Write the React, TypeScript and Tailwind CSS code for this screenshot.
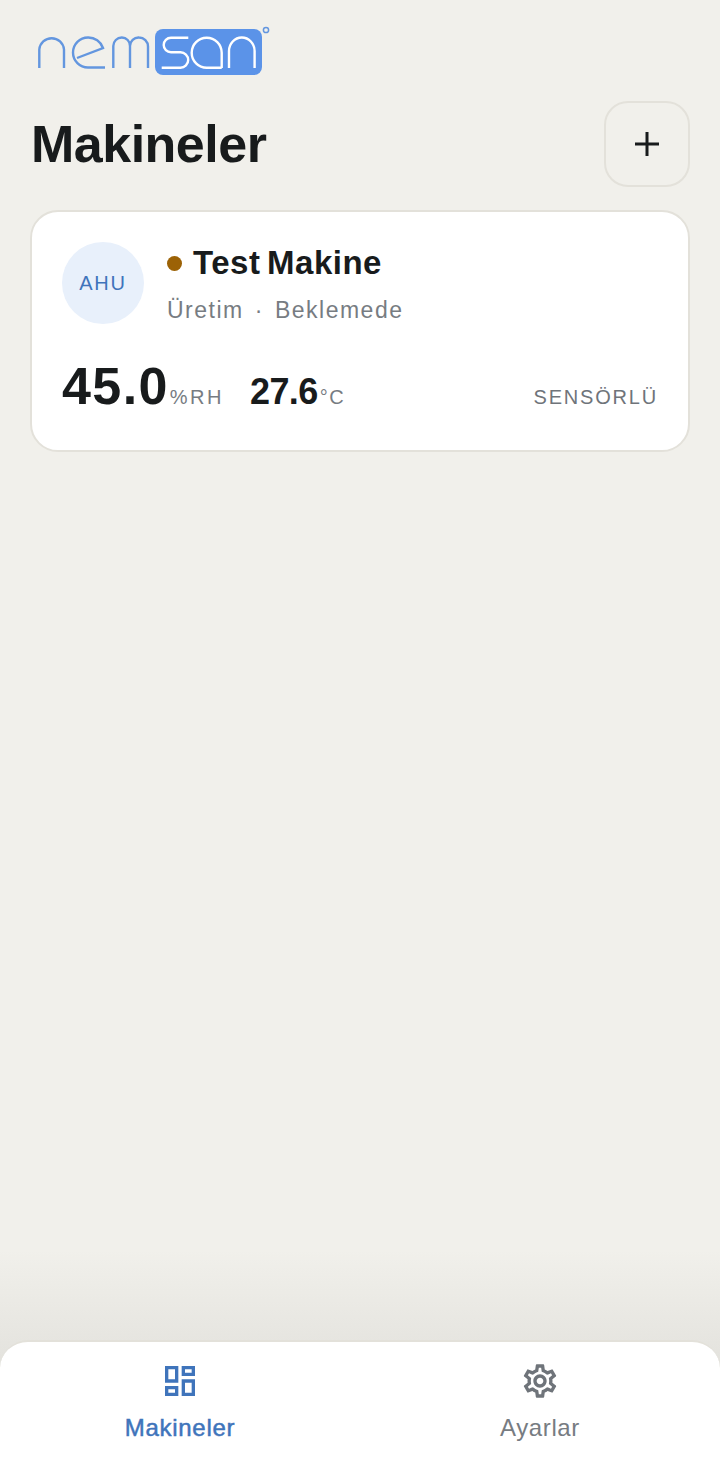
import React from 'react';
import { MdOutlineDashboard, MdOutlineSettings } from 'react-icons/md';

const NemsanLogo = () => (
  <svg width="236" height="54" viewBox="0 0 236 54" fill="none" className="block">
    {/* viewBox origin = page (36, 24) */}
    <g stroke="#6396df" strokeWidth="2.4">
      <path d="M3.3 44V25.5A12.4 12.4 0 0 1 28 25.5V44" />
      <path d="M41 34L67 24A15.5 15.5 0 0 0 52 13.5A15 15 0 0 0 37 28.5A15 15 0 0 0 52 43.5H69" />
      <path d="M77.3 44V22A8.5 8.5 0 0 1 85.8 13.5A8.3 8.3 0 0 1 94 22V44M94 22A8.5 8.5 0 0 1 103 13.5A9 9 0 0 1 112 22.5V44" />
    </g>
    <rect x="119" y="5" width="107" height="46" rx="8" fill="#5b93e8" />
    <g stroke="#ffffff" strokeWidth="2.4">
      <path d="M152.3 13.7H135A7.3 7.3 0 0 0 135 28.3H144.5A7.7 7.7 0 0 1 144.5 43.7H125.7" />
      <path d="M185.7 44V28.7A15 15 0 1 0 170.7 43.7H185.7" />
      <path d="M193 44V27A12.8 13.5 0 0 1 218.6 27V44" />
    </g>
    <circle cx="230" cy="6" r="2.6" stroke="#6396df" strokeWidth="1.5" />
  </svg>
);

const MachineCard = () => (
  <div className="mx-[30px] mt-[23px] h-[242px] rounded-[28px] border-2 border-[#e3e1da] bg-white px-[30px] pt-[30px]">
    <div className="flex items-start gap-[23px]">
      <div className="flex h-[82px] w-[82px] items-center justify-center rounded-full bg-[#e8f0fb] text-[20px] tracking-[1.8px] text-[#3f74bb]">
        AHU
      </div>
      <div className="min-w-0">
        <div className="flex h-[42px] items-center">
          <span className="h-[15px] w-[15px] rounded-full bg-[#9c6206]" />
          <span className="ml-[11px] text-[33px] font-bold leading-[42px] tracking-[0.5px] text-[#181b1c] [word-spacing:-3px]">
            Test Makine
          </span>
        </div>
        <div className="mt-[11px] text-[23px] leading-[30px] tracking-[1.5px] text-[#777c82]">
          Üretim<span className="mx-[11px]">·</span>Beklemede
        </div>
      </div>
    </div>
    <div className="mt-[31px] flex items-baseline">
      <span className="text-[52px] font-bold leading-[60px] tracking-[1.4px] text-[#181b1c]">45.0</span>
      <span className="ml-[1px] text-[20px] tracking-[2.5px] text-[#777c82]">%RH</span>
      <span className="ml-[26px] text-[36px] font-bold tracking-[-0.6px] text-[#181b1c]">27.6</span>
      <span className="ml-[2px] text-[20px] tracking-[1.5px] text-[#777c82]">°C</span>
      <span className="ml-auto text-[20px] tracking-[1.8px] text-[#6f747a]">SENSÖRLÜ</span>
    </div>
  </div>
);

const TabBar = () => (
  <div className="relative">
    {/* fade runs behind the bar's rounded corners */}
    <div className="absolute bottom-[97px] left-0 right-0 h-[118px] bg-gradient-to-b from-[#f1f0eb] to-[#e3e2dd]" />
    <nav className="relative flex h-[125px] rounded-t-[28px] border-t-2 border-[#e3e1da] bg-white">
      <div className="flex flex-1 flex-col items-center pt-[19px]">
        <MdOutlineDashboard className="h-[40px] w-[40px] text-[#3f74bb]" />
        <span className="mt-[12px] text-[24px] font-medium leading-[30px] tracking-[0.7px] text-[#3f74bb] [-webkit-text-stroke:0.5px_#3f74bb]">Makineler</span>
      </div>
      <div className="flex flex-1 flex-col items-center pt-[19px]">
        <MdOutlineSettings className="h-[40px] w-[40px] text-[#6f747a]" />
        <span className="mt-[12px] text-[24px] leading-[30px] tracking-[0.6px] text-[#777c82]">Ayarlar</span>
      </div>
    </nav>
  </div>
);

export default function App() {
  return (
    <div className="flex h-[1465px] w-[720px] flex-col overflow-hidden bg-[#f1f0eb] font-['Liberation_Sans',Arial,sans-serif]">
      <div className="flex-1">
        <div className="pl-[36px] pt-[24px]">
          <NemsanLogo />
        </div>
        <div className="mt-[23px] flex items-center justify-between pl-[31px] pr-[30px]">
          <h1 className="text-[52px] font-bold leading-[86px] tracking-[-0.5px] text-[#181b1c]">Makineler</h1>
          <button className="flex h-[86px] w-[86px] items-center justify-center rounded-[24px] border-2 border-[#e3e1da]">
            <svg width="26" height="26" viewBox="0 0 26 26" fill="none" stroke="#181b1c" strokeWidth="3">
              <path d="M13 1V25M1 13H25" />
            </svg>
          </button>
        </div>
        <MachineCard />
      </div>
      <TabBar />
    </div>
  );
}
